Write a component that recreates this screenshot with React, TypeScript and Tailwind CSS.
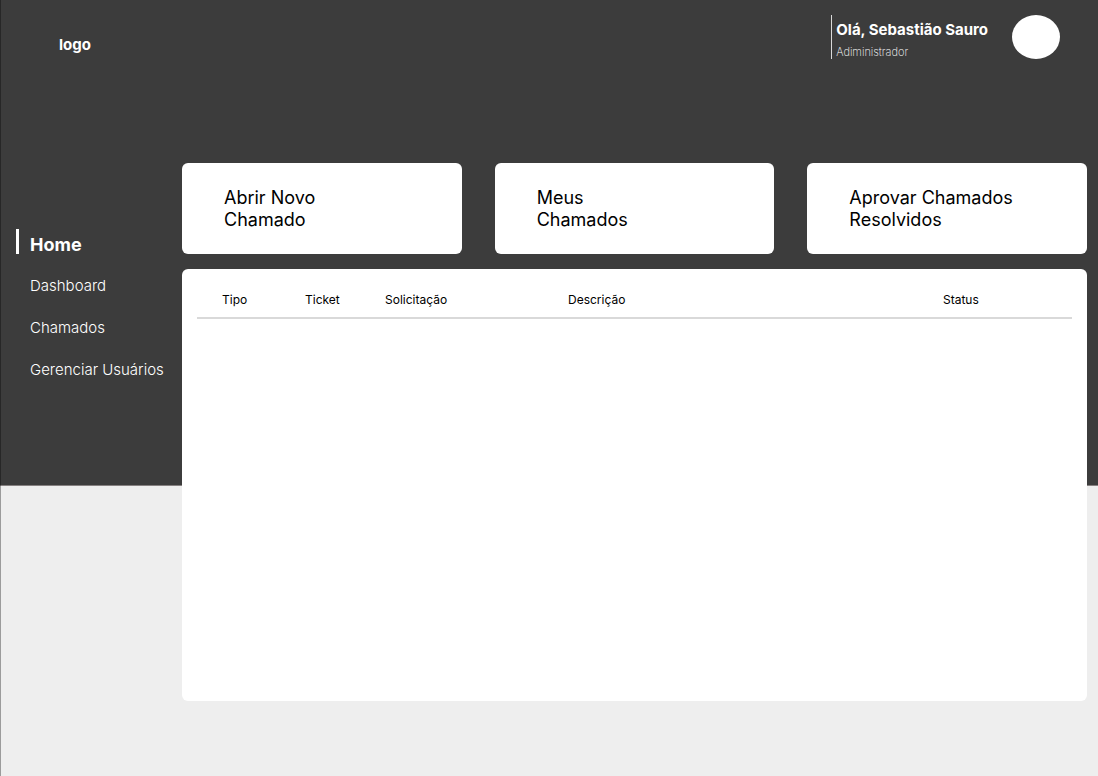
const navItems = ["Dashboard", "Chamados", "Gerenciar Usuários"];

const columns = [
  { label: "Tipo", width: "w-[83px]" },
  { label: "Ticket", width: "w-[80px]" },
  { label: "Solicitação", width: "w-[183px]" },
  { label: "Descrição", width: "w-[375px]" },
  { label: "Status", width: "" },
];

const actions = [
  ["Abrir Novo", "Chamado"],
  ["Meus", "Chamados"],
  ["Aprovar Chamados", "Resolvidos"],
];

function Header() {
  return (
    <header className="flex h-[163px] items-start justify-between pl-[58px] pr-[38px] pt-[15px]">
      <a href="#inicio" className="mt-5 text-[15px] leading-5 font-bold text-white">
        logo
      </a>
      <div className="flex items-start">
        <div className="h-11 border-l border-[#d9d9d9] pl-1 pt-[5px]">
          <p className="text-[15px] leading-5 font-bold text-white">Olá, Sebastião Sauro</p>
          <p className="mt-1 text-[11px] leading-4 font-extralight text-white">Adiministrador</p>
        </div>
        <div className="ml-6 h-11 w-12 rounded-[50%] bg-white" />
      </div>
    </header>
  );
}

function Sidebar() {
  return (
    <nav className="w-[182px] shrink-0 pl-4 pt-[66px] text-white">
      <a
        href="#home"
        aria-current="page"
        className="flex h-[25px] items-end border-l-[3px] border-white pl-[11px] text-lg leading-[18px] font-bold"
      >
        Home
      </a>
      <ul className="mt-[22px] flex flex-col gap-[22px] pl-3.5">
        {navItems.map((item) => (
          <li key={item} className="h-5">
            <a href="#secao" className="block whitespace-nowrap text-[15px] leading-5 font-light">
              {item}
            </a>
          </li>
        ))}
      </ul>
    </nav>
  );
}

export default function App() {
  return (
    <div className="min-h-screen border-l border-black/35 bg-[linear-gradient(#3c3c3c_485px,#858080_485px,#858080_486px,#eeeeee_486px)] font-['Inter',sans-serif]">
      <Header />
      <div className="-ml-px flex pr-[11px]">
        <Sidebar />
        <main className="min-w-0 flex-1">
          <div className="grid grid-cols-3 gap-[33px]">
            {actions.map(([first, second]) => (
              <button
                key={first}
                type="button"
                className="h-[91px] rounded-md bg-white pl-[42px] text-left text-lg leading-[22px] text-black"
              >
                {first}
                <br />
                {second}
              </button>
            ))}
          </div>
          <section className="mt-[15px] h-[432px] rounded-md bg-white px-[15px] pt-[21px]">
            <table className="w-full table-fixed border-separate border-spacing-0">
              <thead>
                <tr className="h-[29px]">
                  {columns.map(({ label, width }) => (
                    <th
                      key={label}
                      scope="col"
                      className={`${width} border-b-2 border-[#d9d9d9] p-0 pl-[25px] text-left align-top text-xs leading-5 font-normal text-black`}
                    >
                      {label}
                    </th>
                  ))}
                </tr>
              </thead>
              <tbody />
            </table>
          </section>
        </main>
      </div>
    </div>
  );
}
